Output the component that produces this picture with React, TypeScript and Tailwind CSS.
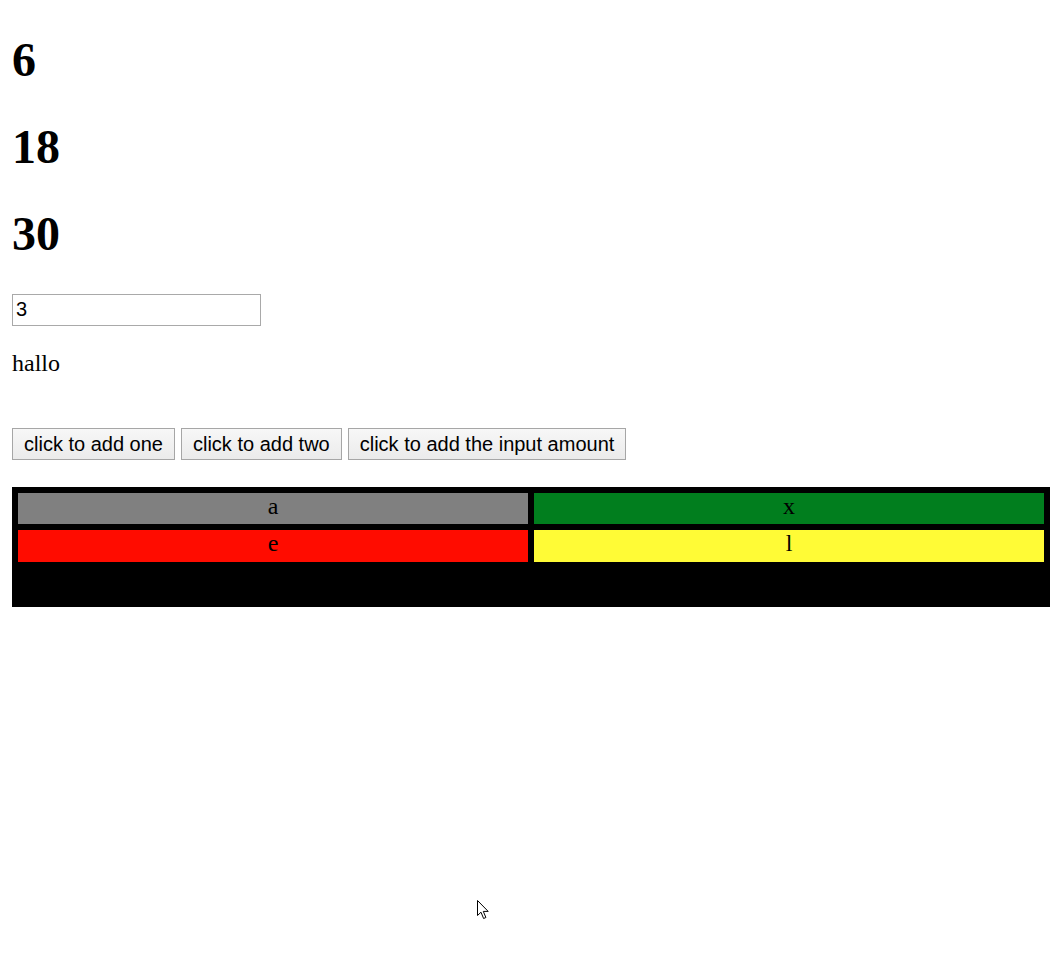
import React from "react";

const serif = { fontFamily: '"Liberation Serif", "Times New Roman", serif' };
const sans = { fontFamily: '"Liberation Sans", Arial, sans-serif' };

export default function App() {
  return (
    <div className="relative min-h-[958px] bg-white text-black px-[12px] pt-[32px]" style={serif}>
      <h1 className="text-[48px] font-bold leading-[55px] mb-[32px]">6</h1>
      <h1 className="text-[48px] font-bold leading-[55px] mb-[32px]">18</h1>
      <h1 className="text-[48px] font-bold leading-[55px] mb-[32px]">30</h1>
      <div className="pt-[1px]">
        <input
          defaultValue="3"
          className="block w-[249px] h-[32px] border border-[#a9a9a9] bg-white px-[3px] pb-[2px] text-[20px] text-black outline-none"
          style={sans}
        />
      </div>
      <p className="mt-[24px] text-[24px] leading-[27.6px]">hallo</p>
      <div className="mt-[50px] flex gap-[6px]">
        {["click to add one", "click to add two", "click to add the input amount"].map((t) => (
          <button
            key={t}
            className="h-[32px] px-[11px] border border-[#a6a6a6] bg-gradient-to-b from-[#f7f7f7] to-[#ebebeb] text-[20px] leading-none text-black"
            style={sans}
          >
            {t}
          </button>
        ))}
      </div>
      <div className="mt-[27px] w-[1038px] bg-black pt-[6px] px-[6px] pb-[45px]">
        <div className="grid grid-cols-2 gap-[6px]">
          <div className="h-[31px] bg-[#808080] text-center text-[24px] leading-[27px]">a</div>
          <div className="h-[31px] bg-[#017e1e] text-center text-[24px] leading-[27px]">x</div>
          <div className="h-[32px] bg-[#ff0c00] text-center text-[24px] leading-[27px]">e</div>
          <div className="h-[32px] bg-[#fffb36] text-center text-[24px] leading-[27px]">l</div>
        </div>
      </div>
      <svg
        className="absolute left-[477px] top-[900px]"
        width="13"
        height="20"
        viewBox="0 0 13 20"
      >
        <path
          d="M0.5 0.5 L0.5 15.5 L4 12.2 L6.6 18.5 L8.9 17.5 L6.3 11.4 L11.2 11.4 Z"
          fill="white"
          stroke="black"
          strokeWidth="1"
          strokeLinejoin="miter"
        />
      </svg>
    </div>
  );
}
